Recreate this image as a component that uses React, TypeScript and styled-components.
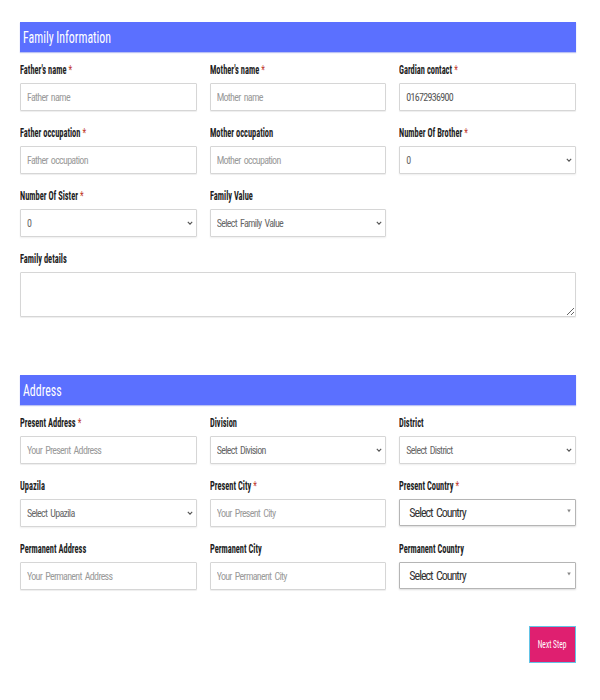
import React from "react";
import styled, { createGlobalStyle } from "styled-components";

const Global = createGlobalStyle`
  html, body { margin: 0; padding: 0; background: #fff; }
  body { font-family: "Roboto Condensed", Roboto, "Liberation Sans", sans-serif; }
  * { box-sizing: border-box; }
`;

const Page = styled.div`
  width: 600px;
  padding: 22px 24px 37px 20px;
`;

const Squeeze = styled.span<{ $origin?: string; $scale?: number }>`
  display: inline-block;
  white-space: nowrap;
  transform: scaleX(${(p) => p.$scale ?? 0.7});
  transform-origin: ${(p) => p.$origin ?? "left"} center;
`;

const SectionBar = styled.h2<{ $top?: number }>`
  margin: ${(p) => p.$top ?? 0}px 0 11px 0;
  height: 30px;
  line-height: 30px;
  background: #5b70ff;
  color: #fff;
  font-weight: 400;
  font-size: 17px;
  padding-left: 3px;
  box-shadow: 0 1px 1px rgba(60, 80, 220, 0.35);
`;

const Grid = styled.div`
  display: grid;
  grid-template-columns: repeat(3, 1fr);
  column-gap: 13px;
  row-gap: 15px;
`;

const Field = styled.div<{ $wide?: boolean }>`
  display: flex;
  flex-direction: column;
  gap: 6px;
  grid-column: ${(p) => (p.$wide ? "1 / -1" : "auto")};
`;

const Label = styled.label`
  display: block;
  height: 14px;
  font-size: 12px;
  line-height: 14px;
  font-weight: 700;
  color: #1e1e1e;
`;

const Star = styled.span`
  color: #c0392b;
  font-weight: 400;
  margin-left: 3px;
`;

const Input = styled.input`
  height: 28px;
  width: 100%;
  border: 1px solid #d6d6d6;
  border-radius: 1px;
  box-shadow: 0 1px 1px rgba(0, 0, 0, 0.07);
  padding: 0 6px;
  font-family: inherit;
  font-size: 10px;
  color: #555;
  letter-spacing: -0.7px;
  word-spacing: 1.5px;
  outline: none;
  &::placeholder { color: #9a9a9a; }
`;

const TextArea = styled.textarea`
  height: 45px;
  width: 100%;
  border: 1px solid #d6d6d6;
  border-radius: 1px;
  box-shadow: 0 1px 1px rgba(0, 0, 0, 0.07);
  font-family: inherit;
  display: block;
`;

const SelectWrap = styled.div`
  position: relative;
  height: 28px;
`;

const Select = styled.select<{ $country?: boolean }>`
  appearance: none;
  -webkit-appearance: none;
  width: 100%;
  height: ${(p) => (p.$country ? 27 : 28)}px;
  border: 1px solid ${(p) => (p.$country ? "#b5b5b5" : "#d6d6d6")};
  border-radius: 1px;
  box-shadow: 0 1px 2px rgba(0, 0, 0, ${(p) => (p.$country ? 0.14 : 0.07)});
  background: #fff;
  padding: 0 ${(p) => (p.$country ? 9 : 6)}px;
  font-family: inherit;
  font-size: ${(p) => (p.$country ? 12 : 10)}px;
  color: ${(p) => (p.$country ? "#333" : "#666")};
  letter-spacing: ${(p) => (p.$country ? -1 : -0.7)}px;
  word-spacing: 1.5px;
  outline: none;
`;

const Arrow = styled.span<{ $country?: boolean }>`
  position: absolute;
  right: 4px;
  top: ${(p) => (p.$country ? 9 : 12)}px;
  pointer-events: none;
  display: flex;
`;

const Footer = styled.div`
  display: flex;
  justify-content: flex-end;
  margin-top: 36px;
`;

const Button = styled.button`
  width: 47px;
  height: 37px;
  background: #df1f70;
  color: #fff;
  border: 1px solid #62c3e6;
  font-family: inherit;
  font-size: 11px;
  padding: 0;
  display: flex;
  align-items: center;
  justify-content: center;
  overflow: visible;
`;

const Chevron = () => (
  <svg width="6" height="4" viewBox="0 0 6 4">
    <path d="M0.8 0.8 L3 3.2 L5.2 0.8" fill="none" stroke="#555" strokeWidth="1.1" />
  </svg>
);

const Triangle = () => (
  <svg width="6" height="6" viewBox="0 0 6 6">
    <path d="M1.2 1.5 H4.8 L3 4.5 Z" fill="#888" />
  </svg>
);

type FieldDef = {
  label: string;
  req?: boolean;
  kind: "input" | "select" | "country";
  text: string;
  value?: string;
};

const TextField = ({ f }: { f: FieldDef }) => (
  <Field>
    <Label>
      <Squeeze>
        {f.label}
        {f.req && <Star>*</Star>}
      </Squeeze>
    </Label>
    {f.kind === "input" ? (
      <Input placeholder={f.text} defaultValue={f.value} />
    ) : (
      <SelectWrap>
        <Select $country={f.kind === "country"} defaultValue={f.text}>
          <option>{f.text}</option>
        </Select>
        <Arrow $country={f.kind === "country"}>
          {f.kind === "country" ? <Triangle /> : <Chevron />}
        </Arrow>
      </SelectWrap>
    )}
  </Field>
);

const family: (FieldDef | null)[] = [
  { label: "Father's name", req: true, kind: "input", text: "Father name" },
  { label: "Mother's name", req: true, kind: "input", text: "Mother name" },
  { label: "Gardian contact", req: true, kind: "input", text: "", value: "01672936900" },
  { label: "Father occupation", req: true, kind: "input", text: "Father occupation" },
  { label: "Mother occupation", kind: "input", text: "Mother occupation" },
  { label: "Number Of Brother", req: true, kind: "select", text: "0" },
  { label: "Number Of Sister", req: true, kind: "select", text: "0" },
  { label: "Family Value", kind: "select", text: "Select Family Value" },
  null,
];

const address: FieldDef[] = [
  { label: "Present Address", req: true, kind: "input", text: "Your Present Address" },
  { label: "Division", kind: "select", text: "Select Division" },
  { label: "District", kind: "select", text: "Select District" },
  { label: "Upazila", kind: "select", text: "Select Upazila" },
  { label: "Present City", req: true, kind: "input", text: "Your Present City" },
  { label: "Present Country", req: true, kind: "country", text: "Select Country" },
  { label: "Permanent Address", kind: "input", text: "Your Permanent Address" },
  { label: "Permanent City", kind: "input", text: "Your Permanent City" },
  { label: "Permanent Country", kind: "country", text: "Select Country" },
];

export default function App() {
  return (
    <Page>
      <Global />
      <SectionBar>
        <Squeeze>Family Information</Squeeze>
      </SectionBar>
      <Grid>
        {family.map((f, i) => (f ? <TextField key={i} f={f} /> : <div key={i} />))}
        <Field $wide>
          <Label>
            <Squeeze>Family details</Squeeze>
          </Label>
          <TextArea />
        </Field>
      </Grid>
      <SectionBar $top={58}>
        <Squeeze>Address</Squeeze>
      </SectionBar>
      <Grid>
        {address.map((f, i) => (
          <TextField key={i} f={f} />
        ))}
      </Grid>
      <Footer>
        <Button>
          <Squeeze $origin="center" $scale={0.68}>Next Step</Squeeze>
        </Button>
      </Footer>
    </Page>
  );
}
